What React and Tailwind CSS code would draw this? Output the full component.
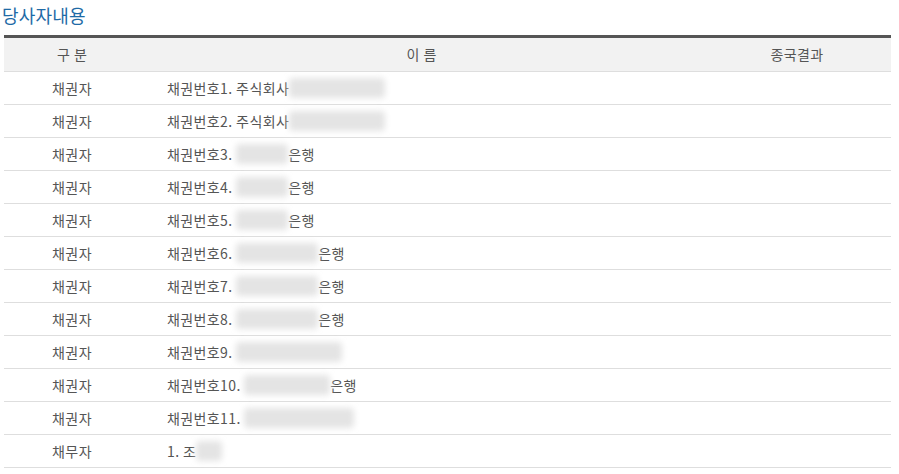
const rows = [
  { gubun: "채권자", pre: "채권번호1. 주식회사", blur: 96, post: "" },
  { gubun: "채권자", pre: "채권번호2. 주식회사", blur: 96, post: "" },
  { gubun: "채권자", pre: "채권번호3. ", blur: 52, post: "은행" },
  { gubun: "채권자", pre: "채권번호4. ", blur: 52, post: "은행" },
  { gubun: "채권자", pre: "채권번호5. ", blur: 52, post: "은행" },
  { gubun: "채권자", pre: "채권번호6. ", blur: 82, post: "은행" },
  { gubun: "채권자", pre: "채권번호7. ", blur: 82, post: "은행" },
  { gubun: "채권자", pre: "채권번호8. ", blur: 82, post: "은행" },
  { gubun: "채권자", pre: "채권번호9. ", blur: 106, post: "" },
  { gubun: "채권자", pre: "채권번호10. ", blur: 86, post: "은행" },
  { gubun: "채권자", pre: "채권번호11. ", blur: 110, post: "" },
  { gubun: "채무자", pre: "1. 조", blur: 26, post: "" },
];

export default function App() {
  return (
    <main
      className="min-h-screen bg-white text-[#555]"
      style={{ fontFamily: '"Noto Sans CJK KR", "Noto Sans", sans-serif' }}
    >
      <div className="pl-[4px] pr-[8px] pt-[2px]">
        <h2 className="text-[18px] leading-[26px] text-[#1e6aa6] -ml-[2px] tracking-[0.2px]">당사자내용</h2>

        <table className="w-full mt-[7px] border-t-[3px] border-[#555] border-collapse text-[14px] tracking-[0.4px]">
          <thead>
            <tr className="bg-[#f2f2f2] border-b border-[#dedede] h-[35px]">
              <th className="w-[136px] font-normal text-center tracking-[4px] pl-[4px]">구분</th>
              <th className="font-normal text-center tracking-[4px] pl-[4px]">이름</th>
              <th className="w-[188px] font-normal text-center">종국결과</th>
            </tr>
          </thead>
          <tbody>
            {rows.map((r, i) => (
              <tr key={i} className="border-b border-[#dedede] h-[33px]">
                <td className="text-center">{r.gubun}</td>
                <td className="pl-[27px]">
                  <span className="inline-flex items-center">
                    <span className="whitespace-pre">{r.pre}</span>
                    <span
                      className="inline-block h-[20px] bg-[#e4e4e4] blur-[3px] rounded-sm"
                      style={{ width: r.blur }}
                    />
                    {r.post && <span>{r.post}</span>}
                  </span>
                </td>
                <td></td>
              </tr>
            ))}
          </tbody>
        </table>
      </div>
    </main>
  );
}
